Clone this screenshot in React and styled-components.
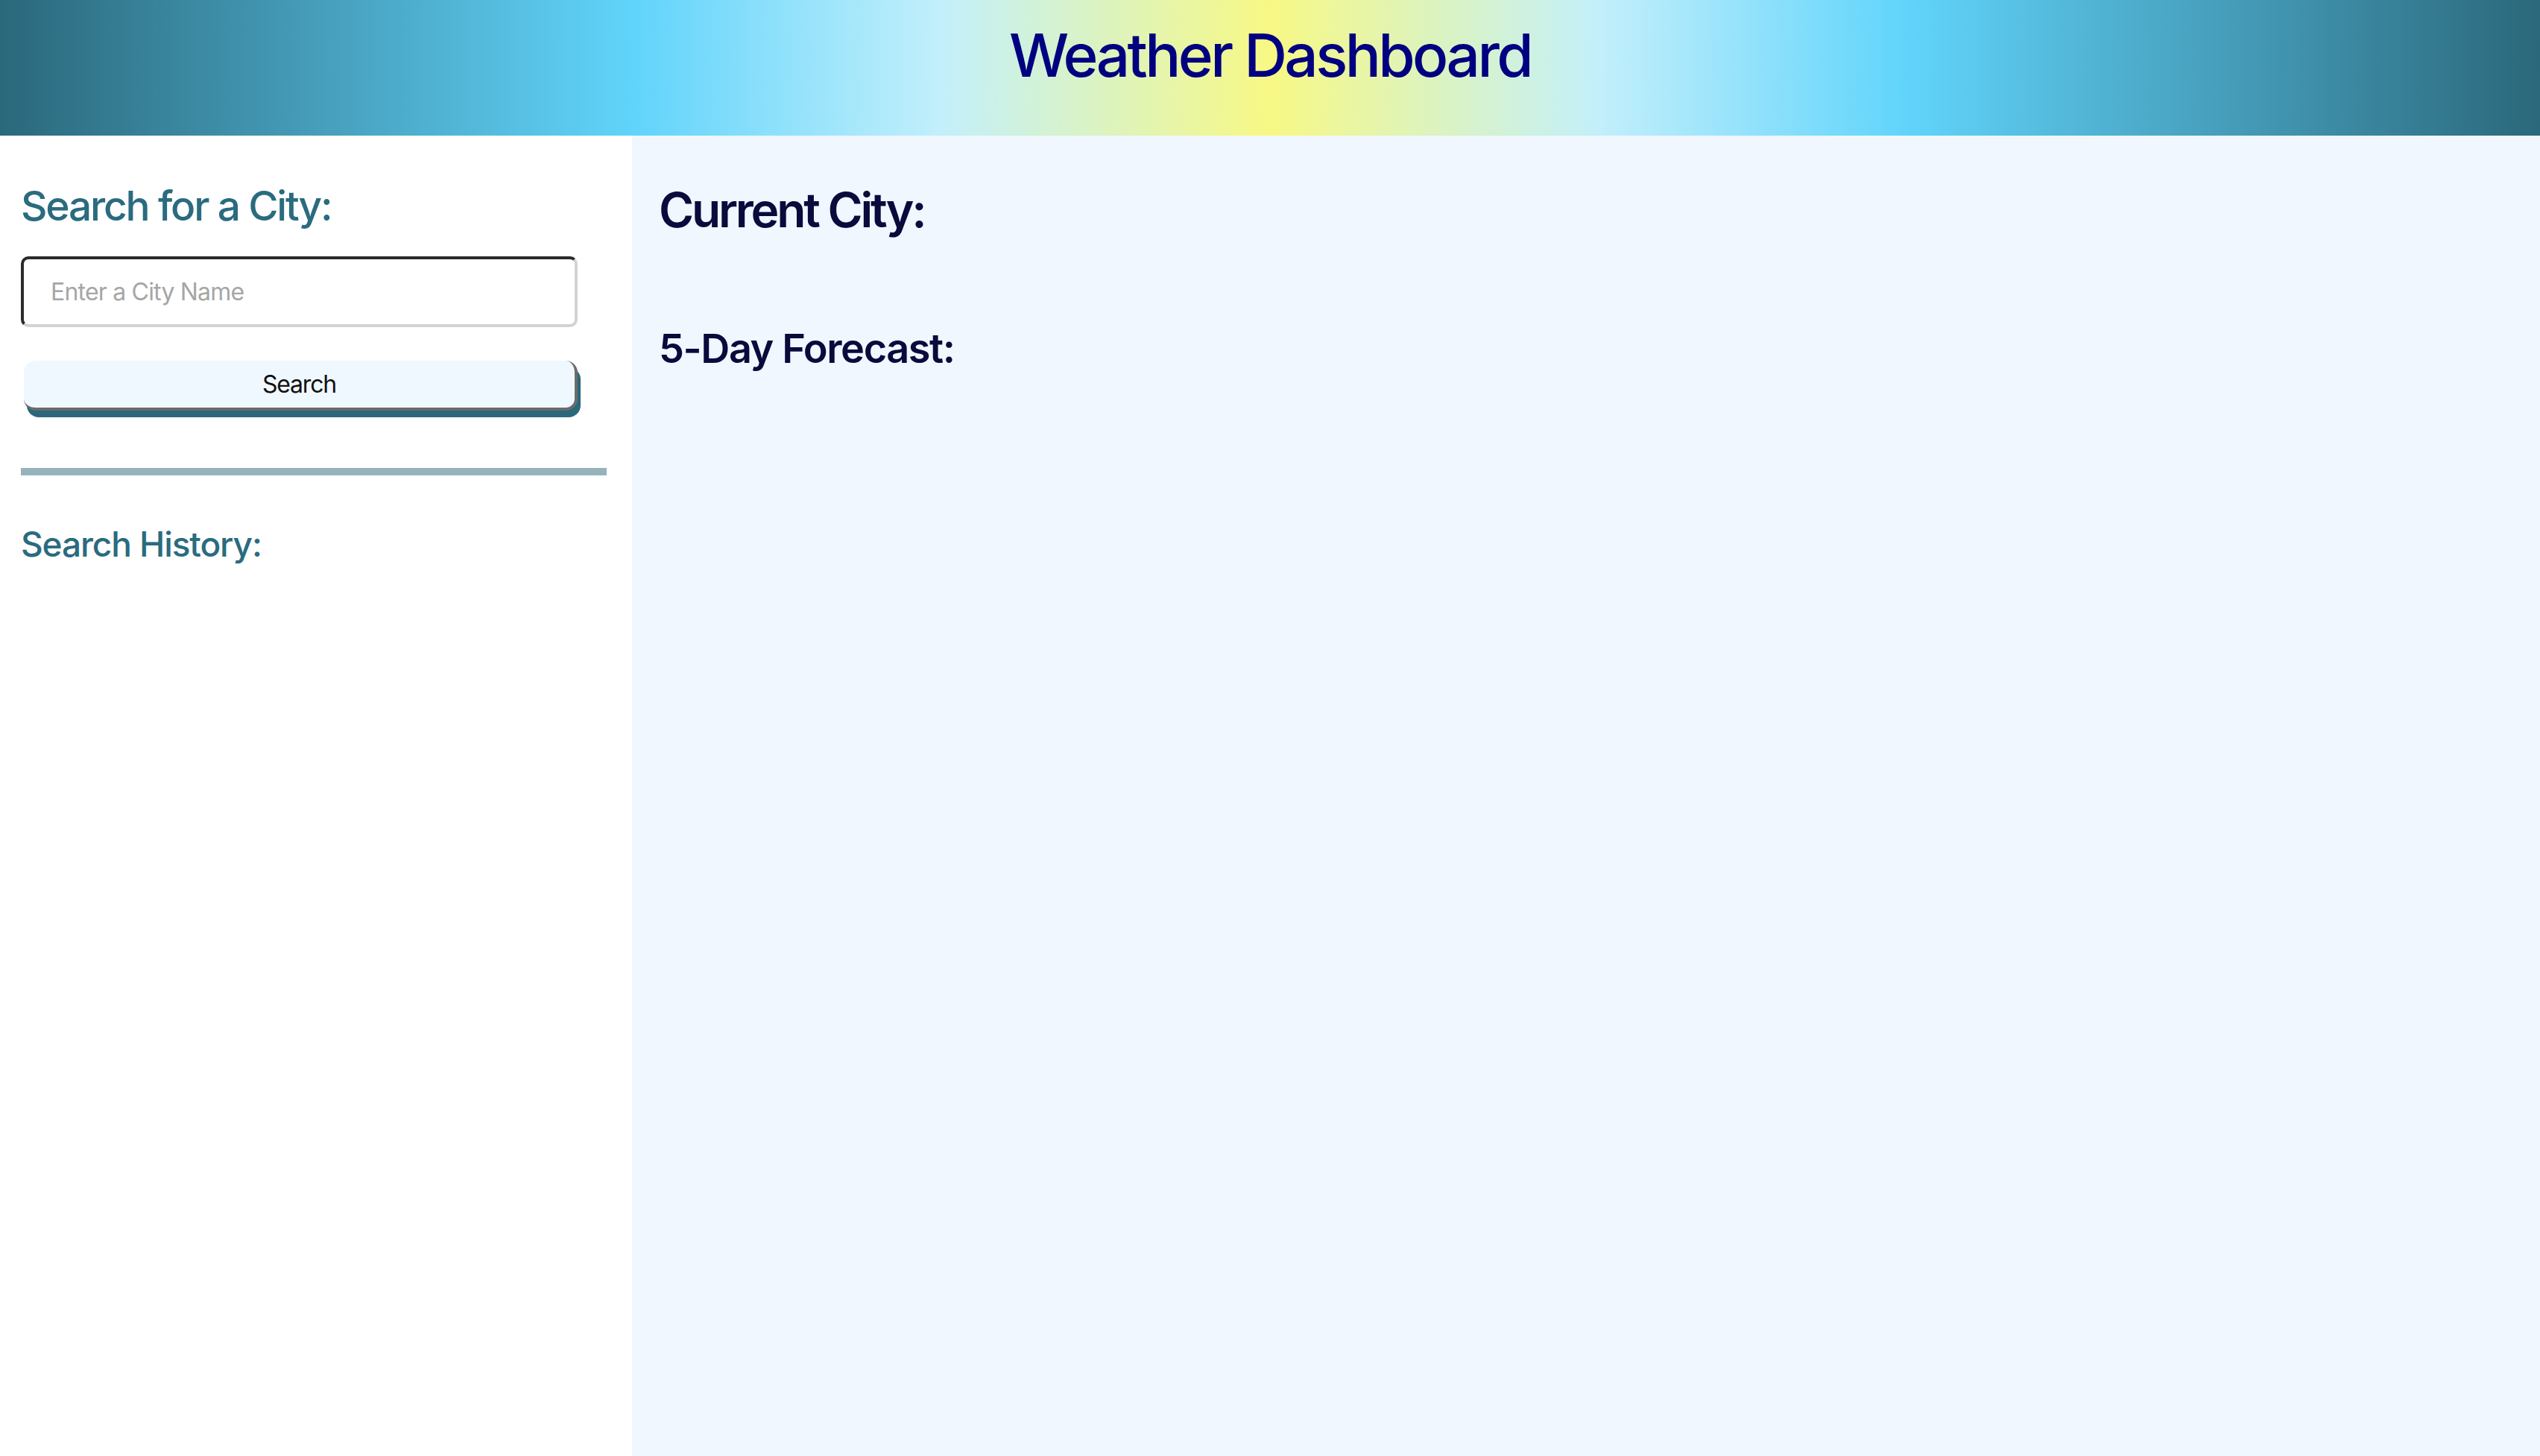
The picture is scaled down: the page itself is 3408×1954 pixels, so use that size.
import React from "react";
import styled, { createGlobalStyle } from "styled-components";

const GlobalStyle = createGlobalStyle`
  html, body {
    margin: 0;
    padding: 0;
  }
  body {
    font-family: Inter, "Noto Sans", "Liberation Sans", sans-serif;
    background: #ffffff;
  }
  * { box-sizing: border-box; }
`;

const Header = styled.header`
  height: 182px;
  background: linear-gradient(
    to right,
    #2b687b 0%,
    #61d4fb 25%,
    #c2effb 37%,
    #f7f884 50%,
    #c2effb 63%,
    #61d4fb 75%,
    #2b687b 100%
  );
  text-align: center;
  padding-top: 25px;
`;

const Title = styled.h1`
  margin: 0;
  font-size: 80px;
  font-weight: 500;
  line-height: normal;
  color: #000080;
  letter-spacing: -3.6px;
`;

const Layout = styled.div`
  display: flex;
  min-height: calc(100vh - 182px);
`;

const Sidebar = styled.aside`
  width: 848px;
  flex: 0 0 848px;
  background: #ffffff;
  padding: 0 34px 0 28px;
  display: flex;
  flex-direction: column;
`;

const SideHeading = styled.h2`
  margin: ${(p) => p.$mt}px 0 0;
  font-size: ${(p) => p.$size}px;
  font-weight: 500;
  line-height: normal;
  color: #2a6b7f;
  letter-spacing: ${(p) => p.$ls}px;
`;

const CityInput = styled.input`
  margin-top: 35px;
  width: 747px;
  height: 95px;
  border-style: solid;
  border-width: 4px;
  border-top-color: #2b2b2b;
  border-left-color: #2b2b2b;
  border-right-color: #d3d3d3;
  border-bottom-color: #d3d3d3;
  border-radius: 10px;
  padding: 0 0 0 36px;
  font-family: Inter, "Noto Sans", "Liberation Sans", sans-serif;
  font-size: 32px;
  letter-spacing: -0.8px;
  color: #222;
  background: #ffffff;
  outline: none;

  &::placeholder {
    color: #a6a6a6;
  }
`;

const SearchButton = styled.button`
  margin: 45px 0 0 4px;
  width: 743px;
  height: 67px;
  background: #f0f8ff;
  border-style: solid;
  border-width: 0 4px 4px 0;
  border-color: #6b6b6b;
  border-radius: 16px;
  box-shadow: 4px 9px 0 #2c687b;
  font-family: Inter, "Noto Sans", "Liberation Sans", sans-serif;
  font-size: 32px;
  letter-spacing: -1.2px;
  color: #111;
  cursor: pointer;
  padding: 0;
`;

const Divider = styled.hr`
  margin: 77px 0 0;
  height: 10px;
  border: none;
  background: #96b3bd;
  width: 100%;
`;

const Main = styled.main`
  flex: 1;
  background: #f0f7fe;
  padding-left: 36px;
`;

const MainHeading = styled.h2`
  margin: ${(p) => p.$mt}px 0 0;
  font-size: ${(p) => p.$size}px;
  font-weight: 600;
  line-height: normal;
  color: #0a0a3c;
  letter-spacing: ${(p) => p.$ls}px;
`;

export default function App() {
  return (
    <>
      <GlobalStyle />
      <Header>
        <Title>Weather Dashboard</Title>
      </Header>
      <Layout>
        <Sidebar>
          <SideHeading $mt={61} $size={55} $ls={-2.2}>
            Search for a City:
          </SideHeading>
          <CityInput type="text" placeholder="Enter a City Name" />
          <SearchButton type="button">Search</SearchButton>
          <Divider />
          <SideHeading $mt={64} $size={46} $ls={-1.1}>
            Search History:
          </SideHeading>
        </Sidebar>
        <Main>
          <MainHeading $mt={61} $size={64} $ls={-3.2}>
            Current City:
          </MainHeading>
          <MainHeading $mt={115} $size={54} $ls={-1.4}>
            5-Day Forecast:
          </MainHeading>
        </Main>
      </Layout>
    </>
  );
}
